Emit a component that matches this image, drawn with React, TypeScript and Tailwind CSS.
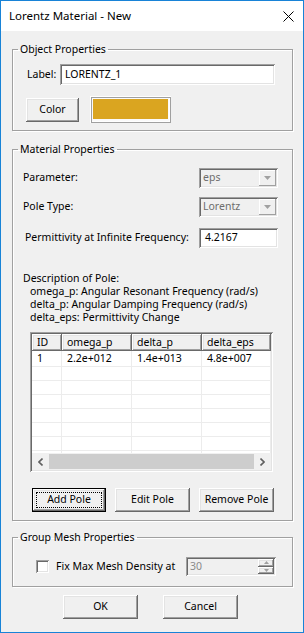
import React from "react";

const raised =
  "shadow-[inset_-1px_-1px_#696969,inset_1px_1px_#ffffff,inset_-2px_-2px_#a0a0a0,inset_2px_2px_#e3e3e3]";
const sunken =
  "shadow-[inset_1px_1px_#a0a0a0,inset_-1px_-1px_#ffffff,inset_2px_2px_#696969,inset_-2px_-2px_#e3e3e3]";
const group =
  "border border-[#a0a0a0] shadow-[1px_1px_#ffffff,inset_1px_1px_#ffffff] min-w-0";

function Legend({ children }: { children: React.ReactNode }) {
  return <legend className="ml-[5px] px-[2px] leading-[14px]">{children}</legend>;
}

function Button({ label, w, focused }: { label: string; w: string; focused?: boolean }) {
  if (focused) {
    return (
      <div className={`${w} h-[24px] border border-black flex`}>
        <div className={`flex-1 p-[3px] ${raised} bg-[#f0f0f0]`}>
          <div className="h-full flex items-center justify-center border border-dotted border-black">
            {label}
          </div>
        </div>
      </div>
    );
  }
  return (
    <div className={`${w} h-[24px] flex items-center justify-center bg-[#f0f0f0] ${raised}`}>
      {label}
    </div>
  );
}

function Combo({ value }: { value: string }) {
  return (
    <div className={`w-[79px] h-[20px] flex p-[2px] bg-[#f0f0f0] ${sunken}`}>
      <div className="flex-1 pl-[2px] flex items-center text-[#6d6d6d]">{value}</div>
      <div className={`w-[17px] flex items-center justify-center bg-[#f0f0f0] shadow-[inset_-1px_-1px_#a0a0a0,inset_1px_1px_#ffffff]`}>
        <svg width="7" height="4" viewBox="0 0 7 4">
          <polygon points="0,0 7,0 3.5,4" fill="#a0a0a0" />
        </svg>
      </div>
    </div>
  );
}

function Chevron({ left }: { left?: boolean }) {
  return (
    <svg width="5" height="8" viewBox="0 0 5 8">
      <polyline
        points={left ? "4.5,0.5 1,4 4.5,7.5" : "0.5,0.5 4,4 0.5,7.5"}
        fill="none"
        stroke="#606060"
        strokeWidth="1.6"
      />
    </svg>
  );
}

const cols = [
  { name: "ID", w: "w-[30px]" },
  { name: "omega_p", w: "w-[70px]" },
  { name: "delta_p", w: "w-[70px]" },
  { name: "delta_eps", w: "w-[69px]" },
];
const row1 = ["1", "2.2e+012", "1.4e+013", "4.8e+007"];

function PoleTable() {
  return (
    <div className={`ml-[17px] w-[243px] h-[140px] bg-white p-[2px] flex flex-col ${sunken}`}>
      <div className="flex h-[17px] shrink-0">
        {cols.map((c) => (
          <div key={c.name} className={`${c.w} shrink-0 pl-[5px] flex items-center bg-[#f0f0f0] ${raised}`}>
            {c.name}
          </div>
        ))}
      </div>
      <div className="flex-1 overflow-hidden flex flex-col">
        {[0, 1, 2, 3, 4, 5, 6, 7].map((r) => (
          <div
            key={r}
            className={`flex shrink-0 border-b border-[#ececec] ${r === 0 ? "h-[16px]" : "h-[14px]"}`}
          >
            {cols.map((c, i) => (
              <div key={c.name} className={`${c.w} shrink-0 pl-[5px] flex items-center border-r border-[#ececec]`}>
                {r === 0 ? row1[i] : ""}
              </div>
            ))}
          </div>
        ))}
      </div>
      <div className="h-[17px] shrink-0 flex bg-[#f0f0f0]">
        <div className="w-[17px] flex items-center justify-center">
          <Chevron left />
        </div>
        <div className="flex-1 bg-[#cdcdcd] my-[1px]" />
        <div className="w-[17px] flex items-center justify-center">
          <Chevron />
        </div>
      </div>
    </div>
  );
}

export default function App() {
  return (
    <div className="w-[304px] h-[633px] border border-[#1883d7] bg-[#f0f0f0] flex flex-col font-['Noto_Sans',sans-serif] text-[10.5px] text-black">
      <div className="h-[30px] shrink-0 bg-white flex items-center justify-between pl-[8px] pr-[9px] text-[11.5px]">
        <span>Lorentz Material - New</span>
        <svg width="11" height="11" viewBox="0 0 11 11">
          <path d="M0.5 0.5 L10.5 10.5 M10.5 0.5 L0.5 10.5" stroke="#000" strokeWidth="1" />
        </svg>
      </div>

      <div className="flex-1 flex flex-col pl-[11px] pr-[10px]">
        <fieldset className={`mt-[11px] ${group} pb-[7px]`}>
          <Legend>Object Properties</Legend>
          <div className="flex items-center pl-[14px] pr-[17px] pt-[8px]">
            <span>Label:</span>
            <div className={`ml-auto w-[215px] h-[21px] bg-white pl-[5px] flex items-center ${sunken}`}>
              LORENTZ_1
            </div>
          </div>
          <div className="mt-[11px] flex items-center pl-[13px]">
            <Button label="Color" w="w-[53px]" />
            <div className="ml-[11px] w-[81px] h-[27px] p-[3px] pb-[4px] bg-[#fafafa] shadow-[inset_1px_1px_#ffffff,inset_-1px_-1px_#a0a0a0,inset_2px_2px_#a0a0a0,inset_-2px_-2px_#ffffff]">
              <div className="w-full h-full bg-[#daa520]" />
            </div>
          </div>
        </fieldset>

        <fieldset className={`mt-[11px] ${group} pb-[8px]`}>
          <Legend>Material Properties</Legend>
          <div className="flex items-center justify-between pl-[10px] pr-[14px] pt-[12px]">
            <span>Parameter:</span>
            <Combo value="eps" />
          </div>
          <div className="mt-[9px] flex items-center justify-between pl-[10px] pr-[14px]">
            <span>Pole Type:</span>
            <Combo value="Lorentz" />
          </div>
          <div className="mt-[11px] flex items-center justify-between pl-[12px] pr-[14px]">
            <span>Permittivity at Infinite Frequency:</span>
            <div className={`w-[79px] h-[20px] bg-white pl-[6px] flex items-center ${sunken}`}>4.2167</div>
          </div>
          <div className="mt-[24px] pl-[10px] leading-[13px]">
            <div>Description of Pole:</div>
            <div className="pl-[7px]">omega_p: Angular Resonant Frequency (rad/s)</div>
            <div className="pl-[7px]">delta_p: Angular Damping Frequency (rad/s)</div>
            <div className="pl-[7px]">delta_eps: Permittivity Change</div>
          </div>
          <div className="mt-[8px]">
            <PoleTable />
          </div>
          <div className="mt-[16px] flex gap-[9px] pl-[19px]">
            <Button label="Add Pole" w="w-[74px]" focused />
            <Button label="Edit Pole" w="w-[75px]" />
            <Button label="Remove Pole" w="w-[75px]" />
          </div>
        </fieldset>

        <fieldset className={`mt-[9px] ${group} pb-[10px]`}>
          <Legend>Group Mesh Properties</Legend>
          <div className="pt-[13px] flex items-center pl-[23px]">
            <div className={`w-[13px] h-[13px] bg-white ${sunken}`} />
            <span className="ml-[7px]">Fix Max Mesh Density at</span>
            <div className={`ml-auto mr-[16px] w-[90px] h-[19px] flex p-[2px] bg-[#f0f0f0] ${sunken}`}>
              <div className="flex-1 pl-[2px] flex items-center text-[#8a8a8a]">30</div>
              <div className="w-[16px] flex flex-col">
                <div className={`flex-1 flex items-center justify-center ${raised}`}>
                  <svg width="5" height="3" viewBox="0 0 5 3">
                    <polygon points="0,3 5,3 2.5,0" fill="#a0a0a0" />
                  </svg>
                </div>
                <div className={`flex-1 flex items-center justify-center ${raised}`}>
                  <svg width="5" height="3" viewBox="0 0 5 3">
                    <polygon points="0,0 5,0 2.5,3" fill="#a0a0a0" />
                  </svg>
                </div>
              </div>
            </div>
          </div>
        </fieldset>

        <div className="mt-[8px] flex gap-[25px] pl-[51px]">
          <Button label="OK" w="w-[75px]" />
          <Button label="Cancel" w="w-[75px]" />
        </div>
      </div>
    </div>
  );
}
